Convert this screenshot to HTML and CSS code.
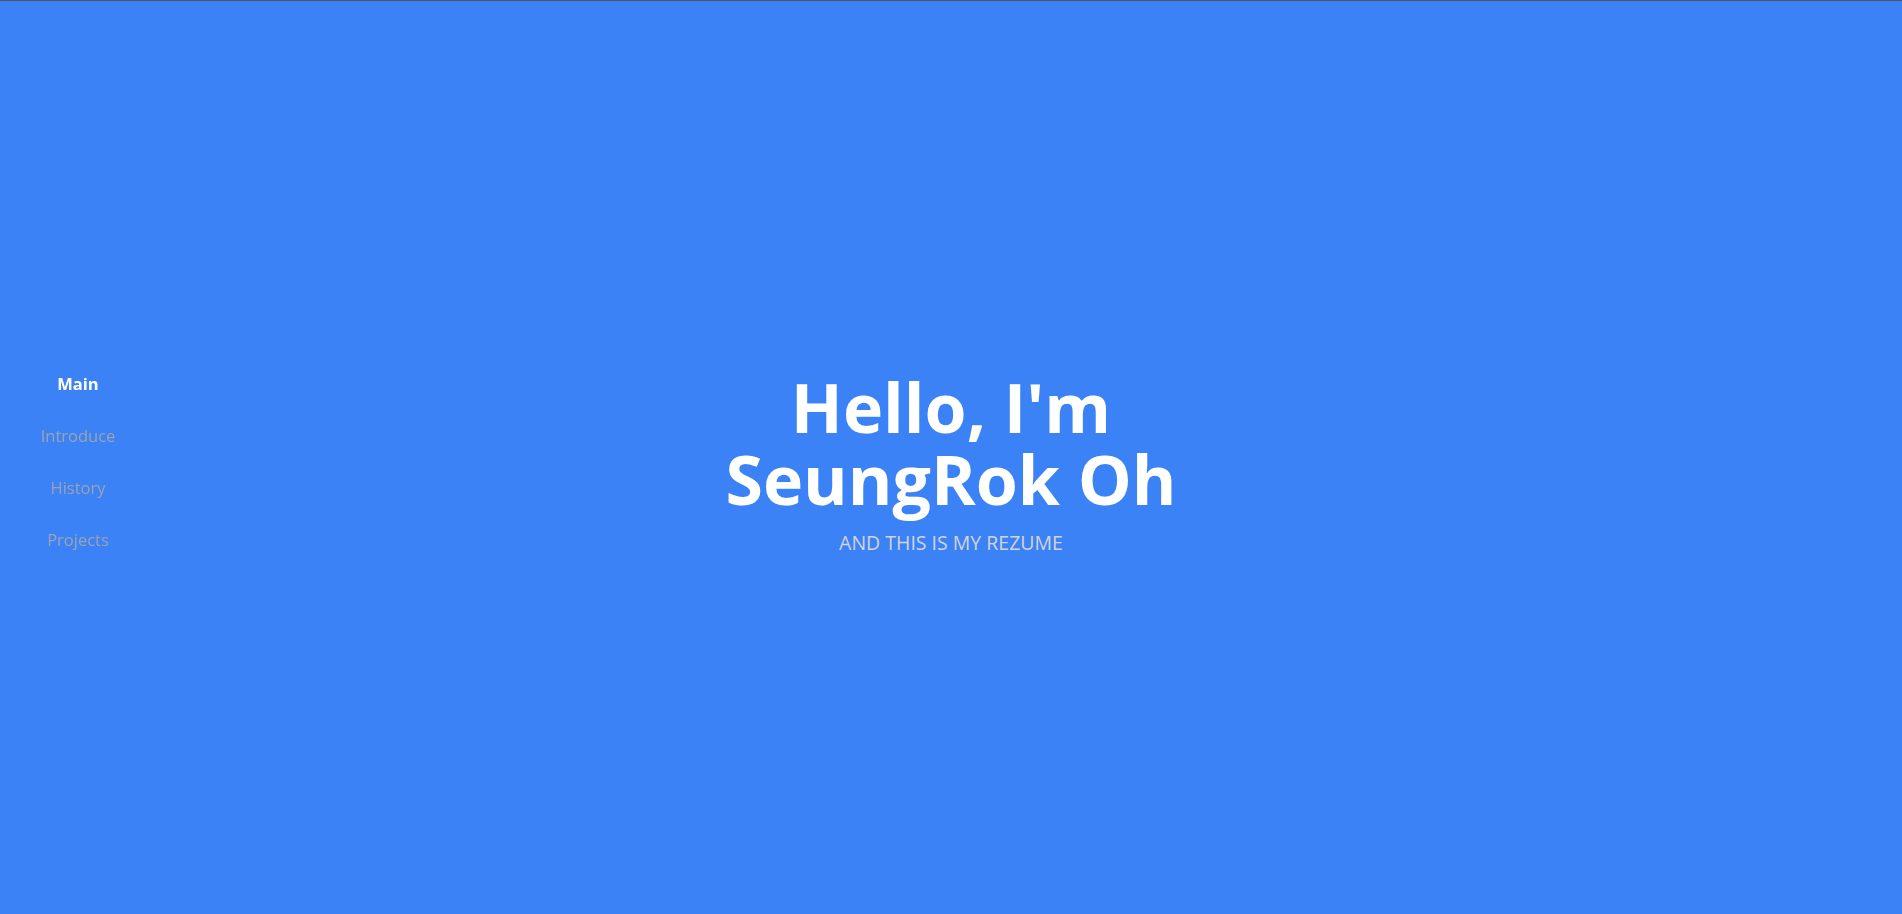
FILE: index.html
```html
<!DOCTYPE html>
<html lang="en">
<head>
<meta charset="utf-8">
<title>SeungRok Oh - Rezume</title>
<link rel="stylesheet" href="styles.css">
</head>
<body>
<nav class="side-nav">
  <a class="nav-link active" href="#main">Main</a>
  <a class="nav-link" href="#introduce">Introduce</a>
  <a class="nav-link" href="#history">History</a>
  <a class="nav-link" href="#projects">Projects</a>
</nav>
<section class="hero" id="main">
  <h1 class="hero-title"><span class="hero-line">Hello, I'm</span><span class="hero-line">SeungRok Oh</span></h1>
  <p class="hero-sub">AND THIS IS MY REZUME</p>
</section>
</body>
</html>
```
FILE: styles.css
```css
html, body {
  margin: 0;
  padding: 0;
  height: 100%;
}
body {
  background: #3b82f6;
  border-top: 1px solid #555;
  box-sizing: border-box;
  font-family: "Open Sans", "Noto Sans", sans-serif;
  overflow: hidden;
}
.side-nav {
  position: fixed;
  left: 0;
  top: 0;
  bottom: 0;
  width: 156px;
  padding-top: 10px;
  box-sizing: border-box;
  display: flex;
  flex-direction: column;
  justify-content: center;
  align-items: center;
  gap: 28px;
}
.nav-link {
  font-size: 16.5px;
  line-height: 24px;
  color: #9ca3af;
  text-decoration: none;
}
.nav-link.active {
  color: #fff;
  font-weight: 700;
}
.hero {
  height: 100%;
  padding-top: 10px;
  box-sizing: border-box;
  display: flex;
  flex-direction: column;
  align-items: center;
  justify-content: center;
  text-align: center;
}
.hero-title {
  margin: 0;
  color: #fff;
  font-size: 68px;
  line-height: 72px;
  font-weight: 700;
  display: flex;
  flex-direction: column;
}
.hero-line {
  display: block;
}
.hero-sub {
  margin: 16px 0 0;
  color: #d1d5db;
  font-size: 19.5px;
  line-height: 24px;
}
```
